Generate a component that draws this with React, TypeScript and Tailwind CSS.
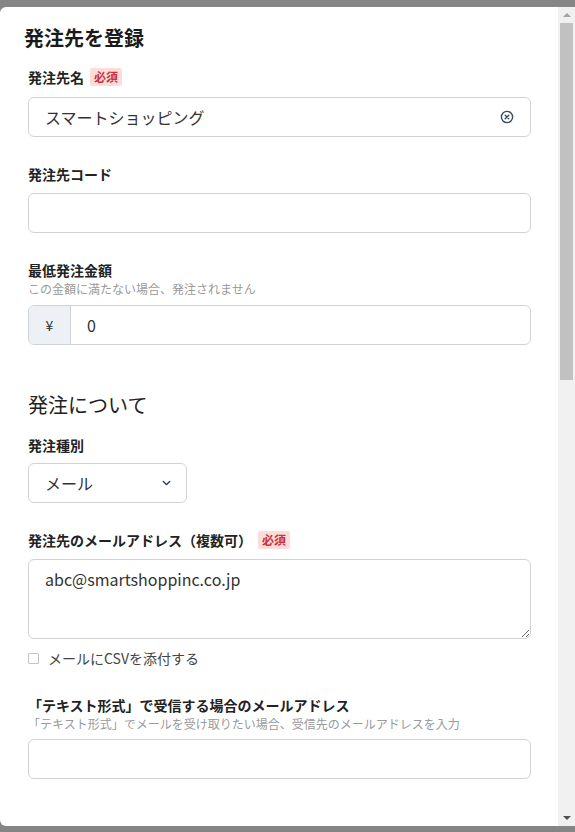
import React, { useState } from 'react'

const font = "font-['Segoe_UI','Noto_Sans_CJK_JP','Noto_Sans',sans-serif]"

function Badge() {
  return (
    <span className="ml-[6px] inline-flex h-[18px] items-center rounded-[2px] bg-[#fddcdc] px-[4px] text-[12px] font-bold leading-none text-[#c8323a]">
      必須
    </span>
  )
}

function Label({ children, required }: { children: React.ReactNode; required?: boolean }) {
  return (
    <div className="flex h-[20px] items-center text-[14px] font-bold leading-[20px] text-[#222]">
      {children}
      {required && <Badge />}
    </div>
  )
}

function Hint({ children }: { children: React.ReactNode }) {
  return <div className="mt-[1px] h-[16px] text-[12px] leading-[16px] text-[#9a9a9a]">{children}</div>
}

function ClearIcon() {
  return (
    <svg width="14" height="14" viewBox="0 0 14 14" fill="none" stroke="#3a4a5e" strokeWidth="1.4" strokeLinecap="round">
      <circle cx="7" cy="7" r="5.6" />
      <path d="M5.2 5.2l3.6 3.6M8.8 5.2l-3.6 3.6" />
    </svg>
  )
}

function Scrollbar() {
  return (
    <div className="flex w-[17px] shrink-0 flex-col bg-[#f1f1f1]">
      <div className="flex h-[16px] items-center justify-center">
        <div className="h-0 w-0 border-x-[4px] border-b-[4px] border-x-transparent border-b-[#a3a3a3]" />
      </div>
      <div className="mx-[2px] h-[357px] bg-[#c1c1c1]" />
      <div className="flex-1" />
      <div className="flex h-[16px] items-center justify-center">
        <div className="h-0 w-0 border-x-[4px] border-t-[4px] border-x-transparent border-t-[#505050]" />
      </div>
    </div>
  )
}

export default function App() {
  const [name, setName] = useState('スマートショッピング')
  const [code, setCode] = useState('')
  const [amount, setAmount] = useState('0')
  const [kind, setKind] = useState('メール')
  const [emails, setEmails] = useState('abc@smartshoppinc.co.jp')
  const [attachCsv, setAttachCsv] = useState(false)
  const [textEmail, setTextEmail] = useState('')

  const inputCls =
    'h-[40px] w-full rounded-[6px] border border-[#cfd3d8] bg-white px-[16px] text-[16px] text-[#333] outline-none'

  return (
    <div className={`flex h-[832px] w-[575px] flex-col bg-[#858585] pt-[7px] ${font}`}>
      <div className="flex h-[819px] overflow-hidden rounded-l-[6px] bg-white">
        <div className="flex-1 overflow-hidden pl-[28px] pr-[27px]">
          <h2 className="-ml-[4px] mt-[17px] text-[20px] font-bold leading-[28px] text-[#1a1a1a]">発注先を登録</h2>

          <div className="mt-[15px]">
            <Label required>発注先名</Label>
            <div className="relative mt-[10px]">
              <input className={`${inputCls} pr-[40px]`} value={name} onChange={e => setName(e.target.value)} />
              <button
                type="button"
                onClick={() => setName('')}
                className="absolute right-[17px] top-1/2 -translate-y-1/2"
              >
                <ClearIcon />
              </button>
            </div>
          </div>

          <div className="mt-[27px]">
            <Label>発注先コード</Label>
            <div className="mt-[9px]">
              <input className={inputCls} value={code} onChange={e => setCode(e.target.value)} />
            </div>
          </div>

          <div className="mt-[27px]">
            <Label>最低発注金額</Label>
            <Hint>この金額に満たない場合、発注されません</Hint>
            <div className="mt-[8px] flex h-[40px] overflow-hidden rounded-[6px] border border-[#cfd3d8]">
              <div className="flex w-[42px] items-center justify-center border-r border-[#cfd3d8] bg-[#edf1f5] text-[14px] text-[#333]">
                ¥
              </div>
              <input
                className="flex-1 px-[16px] text-[16px] text-[#333] outline-none"
                value={amount}
                onChange={e => setAmount(e.target.value)}
              />
            </div>
          </div>

          <h3 className="mt-[46px] text-[20px] font-normal leading-[28px] text-[#222]">発注について</h3>

          <div className="mt-[16px]">
            <Label>発注種別</Label>
            <div className="relative mt-[8px] w-[159px]">
              <select
                className="h-[40px] w-full appearance-none rounded-[6px] border border-[#cfd3d8] bg-white pl-[16px] text-[16px] text-[#333] outline-none"
                value={kind}
                onChange={e => setKind(e.target.value)}
              >
                <option>メール</option>
                <option>FAX</option>
              </select>
              <svg
                className="pointer-events-none absolute right-[16px] top-1/2 -translate-y-1/2"
                width="9"
                height="5"
                viewBox="0 0 10 6"
                fill="none"
                stroke="#2d3e52"
                strokeWidth="1.6"
                strokeLinecap="round"
                strokeLinejoin="round"
              >
                <path d="M1 1l4 4 4-4" />
              </svg>
            </div>
          </div>

          <div className="mt-[27px]">
            <Label required>発注先のメールアドレス（複数可）</Label>
            <div className="mt-[9px]">
              <textarea
                className="block h-[80px] w-full rounded-[6px] border border-[#cfd3d8] px-[16px] py-[8px] text-[16px] leading-[22px] text-[#333] outline-none"
                value={emails}
                onChange={e => setEmails(e.target.value)}
              />
            </div>
            <label className="mt-[9px] flex h-[20px] items-center gap-[9px] text-[14px] text-[#444]">
              <input
                type="checkbox"
                checked={attachCsv}
                onChange={e => setAttachCsv(e.target.checked)}
                className="h-[11px] w-[11px] appearance-none rounded-[1px] border-[1.5px] border-[#c4c4c4] bg-white"
              />
              メールにCSVを添付する
            </label>
          </div>

          <div className="mt-[27px]">
            <Label>「テキスト形式」で受信する場合のメールアドレス</Label>
            <Hint>「テキスト形式」でメールを受け取りたい場合、受信先のメールアドレスを入力</Hint>
            <div className="mt-[7px]">
              <input className={inputCls} value={textEmail} onChange={e => setTextEmail(e.target.value)} />
            </div>
          </div>
        </div>
        <Scrollbar />
      </div>
    </div>
  )
}
